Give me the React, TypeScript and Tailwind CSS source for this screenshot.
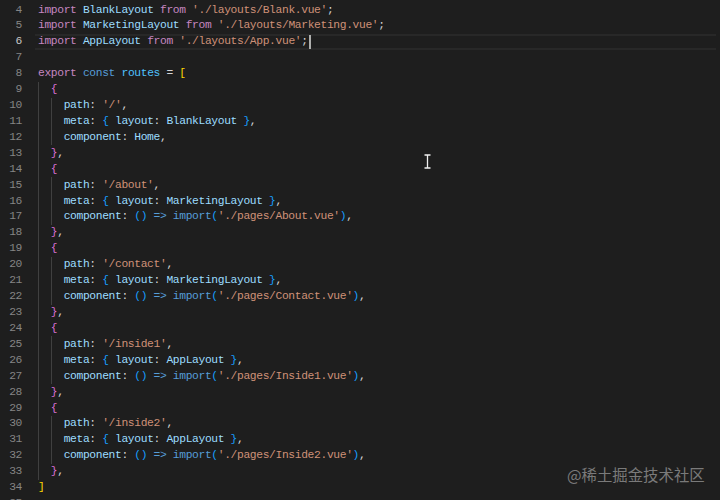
import React from "react";

type Tok = [string, string];
interface Line {
  n: number;
  guides: number;
  toks: Tok[];
  active?: boolean;
}

// token colours (Dark+ with bracket pair colouring)
const K = "text-[#c586c0]";
const V = "text-[#9cdcfe]";
const S = "text-[#ce9178]";
const B = "text-[#569cd6]";
const C = "text-[#4fc1ff]";
const P = "text-[#d4d4d4]";
const Y = "text-[#ffd700]";
const O = "text-[#da70d6]";
const L = "text-[#179fff]";

const imp = (name: string, file: string): Tok[] => [
  [K, "import"],
  [P, " "],
  [V, name],
  [P, " "],
  [K, "from"],
  [P, " "],
  [S, `'${file}'`],
  [P, ";"],
];

const open: Tok[] = [[O, "{"]];
const close: Tok[] = [
  [O, "}"],
  [P, ","],
];
const path = (p: string): Tok[] => [
  [V, "path"],
  [P, ": "],
  [S, `'${p}'`],
  [P, ","],
];
const meta = (layout: string): Tok[] => [
  [V, "meta"],
  [P, ": "],
  [L, "{"],
  [P, " "],
  [V, "layout"],
  [P, ": "],
  [V, layout],
  [P, " "],
  [L, "}"],
  [P, ","],
];
const lazy = (file: string): Tok[] => [
  [V, "component"],
  [P, ": "],
  [L, "()"],
  [P, " "],
  [B, "=>"],
  [P, " "],
  [B, "import"],
  [L, "("],
  [S, `'./pages/${file}'`],
  [L, ")"],
  [P, ","],
];

const route = (start: number, p: string, layout: string, comp: Tok[]): Line[] => [
  { n: start, guides: 1, toks: open },
  { n: start + 1, guides: 2, toks: path(p) },
  { n: start + 2, guides: 2, toks: meta(layout) },
  { n: start + 3, guides: 2, toks: comp },
  { n: start + 4, guides: 1, toks: close },
];

const lines: Line[] = [
  { n: 4, guides: 0, toks: imp("BlankLayout", "./layouts/Blank.vue") },
  { n: 5, guides: 0, toks: imp("MarketingLayout", "./layouts/Marketing.vue") },
  { n: 6, guides: 0, toks: imp("AppLayout", "./layouts/App.vue"), active: true },
  { n: 7, guides: 0, toks: [] },
  {
    n: 8,
    guides: 0,
    toks: [
      [K, "export"],
      [P, " "],
      [B, "const"],
      [P, " "],
      [C, "routes"],
      [P, " = "],
      [Y, "["],
    ],
  },
  ...route(9, "/", "BlankLayout", [
    [V, "component"],
    [P, ": "],
    [V, "Home"],
    [P, ","],
  ]),
  ...route(14, "/about", "MarketingLayout", lazy("About.vue")),
  ...route(19, "/contact", "MarketingLayout", lazy("Contact.vue")),
  ...route(24, "/inside1", "AppLayout", lazy("Inside1.vue")),
  ...route(29, "/inside2", "AppLayout", lazy("Inside2.vue")),
  { n: 34, guides: 0, toks: [[Y, "]"]] },
  { n: 35, guides: 0, toks: [] },
];

function CodeLine({ line }: { line: Line }) {
  return (
    <div className="flex h-[15.93px] items-center">
      <div
        className={
          "w-[22px] shrink-0 text-right " +
          (line.active ? "text-[#c6c6c6]" : "text-[#858585]")
        }
      >
        {line.n}
      </div>
      <div
        className={
          "ml-[13px] flex h-full flex-1 items-center pl-[3px] " +
          (line.active ? "mr-[4px] border-y-2 border-[#282828]" : "")
        }
      >
        {Array.from({ length: line.guides }).map((_, i) => (
          <span key={i} className="inline-block h-full w-[12.84px] shrink-0 border-l border-[#404040]" />
        ))}
        <span className="whitespace-pre">
          {line.toks.map(([cls, text], i) => (
            <span key={i} className={cls}>
              {text}
            </span>
          ))}
        </span>
        {line.active && <span className="ml-[1px] inline-block h-[14px] w-[2px] bg-[#aeafad]" />}
      </div>
    </div>
  );
}

export default function App() {
  return (
    <div className="relative h-[500px] w-[720px] overflow-hidden bg-[#1e1e1e] font-['Liberation_Mono',monospace] text-[11.3px] tracking-[-0.36px]">
      <div className="flex flex-col pt-[2px]">
        {lines.map((line) => (
          <CodeLine key={line.n} line={line} />
        ))}
      </div>

      {/* mouse I-beam */}
      <svg className="absolute left-[423px] top-[154px]" width="9" height="15" viewBox="0 0 9 15">
        <path d="M1 1h7M1 14h7M4.5 1v13" stroke="#1e1e1e" strokeWidth="3" fill="none" />
        <path d="M1.5 1h6M1.5 14h6M4.5 1v13" stroke="#f0f0f0" strokeWidth="1.3" fill="none" />
      </svg>

      {/* watermark */}
      <div className="absolute left-[567px] top-[463px] font-['Noto_Sans_CJK_SC',sans-serif] text-[15.4px] tracking-normal text-[#7a7a7a]">
        @稀土掘金技术社区
      </div>
    </div>
  );
}
